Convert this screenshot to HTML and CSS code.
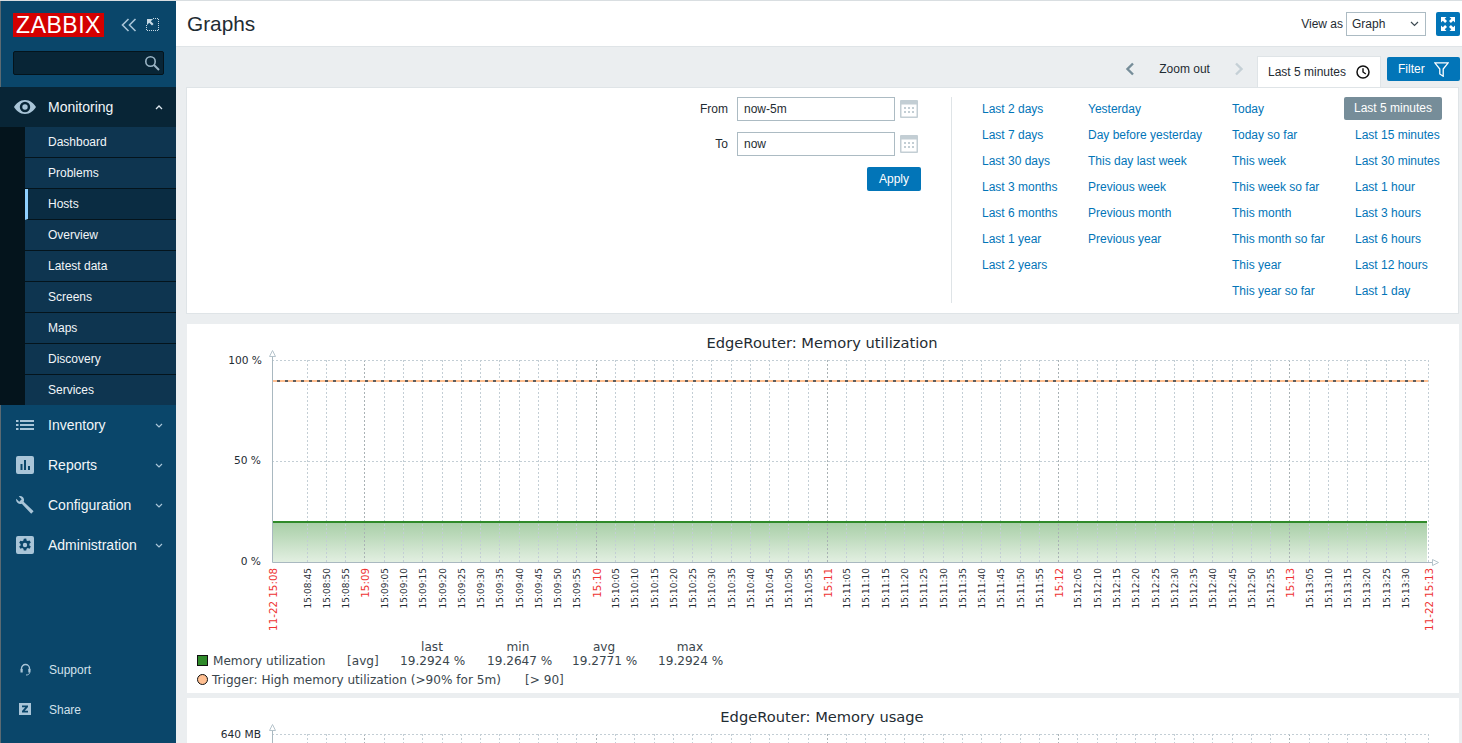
FILE: index.html
```html
<!DOCTYPE html>
<html lang="en">
<head>
<meta charset="utf-8">
<title>Graphs</title>
<link rel="stylesheet" href="styles.css">
</head>
<body>
<div class="app">
  <aside class="sidebar">
    <div class="brand">
      <span class="logo">ZABBIX</span>
      <svg class="brand-icon" width="16" height="14" viewBox="0 0 16 14"><path d="M7.500 1L1.500 7l6 6M14.500 1l-6 6 6 6" fill="none" stroke="#a9c5d8" stroke-width="1.600"/></svg>
      <svg class="brand-icon kiosk" width="13" height="13" viewBox="0 0 13 13"><path d="M7 .5h5.500v12H.5V7" fill="none" stroke="#c5d8e4" stroke-dasharray="1 1"/><path d="M1 1h6L4.800 3.200 7.600 6 6 7.600 3.200 4.800 1 7z" fill="#c5d8e4"/></svg>
    </div>
    <div class="search">
      <svg width="16" height="16" viewBox="0 0 16 16"><circle cx="6.500" cy="6.500" r="4.700" fill="none" stroke="#9bb5c6" stroke-width="1.600"/><path d="M10 10l5 5" stroke="#9bb5c6" stroke-width="2"/></svg>
    </div>
    <nav class="menu">
      <div class="menu-item open">
        <svg class="menu-icon eye" width="22" height="14" viewBox="0 0 22 14"><path fill-rule="evenodd" d="M11 0c5 0 9 3.500 11 7-2 3.500-6 7-11 7S2 10.500 0 7c2-3.500 6-7 11-7zm0 1.800a5.200 5.200 0 1 0 0 10.400 5.200 5.200 0 0 0 0-10.400zM11 4.300a2.700 2.700 0 1 1 0 5.400 2.700 2.700 0 0 1 0-5.400z" fill="#a9c5d8"/></svg>
        <span class="menu-label">Monitoring</span>
        <svg class="chevron" width="8" height="5" viewBox="0 0 8 5"><path d="M1 4l3-3 3 3" fill="none" stroke="#dfe9f0" stroke-width="1.300"/></svg>
      </div>
      <div class="submenu">
        <ul class="sub-list">
          <li class="sub-item">Dashboard</li>
          <li class="sub-item">Problems</li>
          <li class="sub-item selected">Hosts</li>
          <li class="sub-item">Overview</li>
          <li class="sub-item">Latest data</li>
          <li class="sub-item">Screens</li>
          <li class="sub-item">Maps</li>
          <li class="sub-item">Discovery</li>
          <li class="sub-item">Services</li>
        </ul>
      </div>
      <div class="menu-item">
        <svg class="menu-icon" width="18" height="12" viewBox="0 0 18 12"><path d="M0 1h2.500v2H0zM4 1h14v2H4zM0 5h2.500v2H0zM4 5h14v2H4zM0 9h2.500v2H0zM4 9h14v2H4z" fill="#a9c5d8"/></svg>
        <span class="menu-label">Inventory</span>
        <svg class="chevron" width="8" height="5" viewBox="0 0 8 5"><path d="M1 1l3 3 3-3" fill="none" stroke="#a9c5d8" stroke-width="1.200"/></svg>
      </div>
      <div class="menu-item">
        <svg class="menu-icon" width="18" height="18" viewBox="0 0 18 18"><path fill-rule="evenodd" d="M2 0h14a2 2 0 0 1 2 2v14a2 2 0 0 1-2 2H2a2 2 0 0 1-2-2V2a2 2 0 0 1 2-2zm2.500 8v6h2V8zm3.500-4v10h2V4zm4 6v4h2v-4z" fill="#a9c5d8"/></svg>
        <span class="menu-label">Reports</span>
        <svg class="chevron" width="8" height="5" viewBox="0 0 8 5"><path d="M1 1l3 3 3-3" fill="none" stroke="#a9c5d8" stroke-width="1.200"/></svg>
      </div>
      <div class="menu-item">
        <svg class="menu-icon" width="18" height="18" viewBox="0 0 18 18"><path d="M.3 2.800L3.200 5.700 5.700 3.200 2.800.3C5 -.5 7.800 .8 8 3.500c.1 1-.1 1.700-.4 2.300L17.600 15.200 15.200 17.800 5.800 7.700C3.100 8.700-.8 6.300.3 2.800z" fill="#a9c5d8"/></svg>
        <span class="menu-label">Configuration</span>
        <svg class="chevron" width="8" height="5" viewBox="0 0 8 5"><path d="M1 1l3 3 3-3" fill="none" stroke="#a9c5d8" stroke-width="1.200"/></svg>
      </div>
      <div class="menu-item">
        <svg class="menu-icon" width="18" height="18" viewBox="0 0 18 18"><path fill-rule="evenodd" d="M2 0h14a2 2 0 0 1 2 2v14a2 2 0 0 1-2 2H2a2 2 0 0 1-2-2V2a2 2 0 0 1 2-2zm5.800 2.800l-.4 1.800-1.200.7-1.800-.6-1.200 2.100 1.400 1.200v1.400l-1.400 1.200 1.200 2.100 1.800-.6 1.200.7.400 1.800h2.400l.4-1.800 1.200-.7 1.800.6 1.200-2.100-1.400-1.200V7.800l1.400-1.200-1.200-2.100-1.800.6-1.200-.7-.4-1.800zM9 6.800a2.200 2.200 0 1 1 0 4.400 2.200 2.200 0 0 1 0-4.400z" fill="#a9c5d8"/></svg>
        <span class="menu-label">Administration</span>
        <svg class="chevron" width="8" height="5" viewBox="0 0 8 5"><path d="M1 1l3 3 3-3" fill="none" stroke="#a9c5d8" stroke-width="1.200"/></svg>
      </div>
    </nav>
    <div class="user-menu">
      <div class="user-item">
        <svg class="user-icon headset" width="11" height="13" viewBox="0 0 11 13"><path d="M1.500 7.500V5.500a4 4 0 0 1 8 0v2" fill="none" stroke="#a9c5d8" stroke-width="1.400"/><path d="M.5 6h2.200v3.500H.5zM8.300 6h2.200v3.500H8.300z" fill="#a9c5d8"/><path d="M9.500 9.500c0 1.800-1.500 2.500-3.500 2.500" fill="none" stroke="#a9c5d8"/></svg>
        <span>Support</span>
      </div>
      <div class="user-item">
        <svg class="user-icon" width="12" height="12" viewBox="0 0 12 12"><path fill-rule="evenodd" d="M0 0h12v12H0zm3 2.500v1.700h3.300L3 8v1.500h6V7.800H5.700L9 4V2.500z" fill="#a9c5d8"/></svg>
        <span>Share</span>
      </div>
    </div>
  </aside>

  <main class="main">
    <header class="page-header">
      <h1 class="page-title">Graphs</h1>
      <div class="header-controls">
        <label class="view-label">View as</label>
        <div class="select">
          <span>Graph</span>
          <svg width="9" height="6" viewBox="0 0 9 6"><path d="M1 1l3.500 3.500L8 1" fill="none" stroke="#3d4a52" stroke-width="1.200"/></svg>
        </div>
        <button class="icon-button" aria-label="Fullscreen">
          <svg width="14" height="14" viewBox="0 0 14 14"><path d="M0 0h5.500L3.700 1.800 6 4.100 4.100 6 1.800 3.700 0 5.500zM14 0v5.500L12.200 3.700 9.900 6 8 4.100 10.300 1.800 8.500 0zM0 14V8.500l1.800 1.800L4.100 8 6 9.900 3.700 12.200 5.500 14zM14 14H8.500l1.800-1.800L8 9.900 9.900 8 12.200 10.300 14 8.500z" fill="#fff"/></svg>
        </button>
      </div>
    </header>

    <div class="filter-bar">
      <svg class="arrow" width="10" height="14" viewBox="0 0 10 14"><path d="M8 1.500L2.500 7 8 12.500" fill="none" stroke="#768d99" stroke-width="2.400"/></svg>
      <span class="zoom-out">Zoom out</span>
      <svg class="arrow next" width="10" height="14" viewBox="0 0 10 14"><path d="M2 1.500L7.500 7 2 12.500" fill="none" stroke="#c5d0d6" stroke-width="2.400"/></svg>
      <div class="time-tab">
        <span>Last 5 minutes</span>
        <svg width="14" height="14" viewBox="0 0 14 14"><circle cx="7" cy="7" r="6" fill="none" stroke="#111" stroke-width="1.500"/><path d="M7 3.200V7l2.800 2" fill="none" stroke="#111" stroke-width="1.400"/></svg>
      </div>
      <button class="filter-button">
        <span>Filter</span>
        <svg width="15" height="15" viewBox="0 0 15 15"><path d="M.8 .8h13.400L9.200 7v7.200L5.800 12V7z" fill="none" stroke="#fff" stroke-width="1.300"/></svg>
      </button>
    </div>

    <section class="filter-panel">
      <form class="time-form">
        <div class="form-row">
          <label class="form-label">From</label>
          <div class="text-input">now-5m</div>
          <svg class="calendar" width="18" height="18" viewBox="0 0 18 18"><path fill-rule="evenodd" d="M1 0h16a1 1 0 0 1 1 1v16a1 1 0 0 1-1 1H1a1 1 0 0 1-1-1V1a1 1 0 0 1 1-1zm.5 4.500v12h15v-12zM4 7h2v2H4zm4 0h2v2H8zm4 0h2v2h-2zm-8 4h2v2H4zm4 0h2v2H8zm4 0h2v2h-2z" fill="#c3ced4"/></svg>
        </div>
        <div class="form-row">
          <label class="form-label">To</label>
          <div class="text-input">now</div>
          <svg class="calendar" width="18" height="18" viewBox="0 0 18 18"><path fill-rule="evenodd" d="M1 0h16a1 1 0 0 1 1 1v16a1 1 0 0 1-1 1H1a1 1 0 0 1-1-1V1a1 1 0 0 1 1-1zm.5 4.500v12h15v-12zM4 7h2v2H4zm4 0h2v2H8zm4 0h2v2h-2zm-8 4h2v2H4zm4 0h2v2H8zm4 0h2v2h-2z" fill="#c3ced4"/></svg>
        </div>
        <div class="form-actions"><button class="apply" type="button">Apply</button></div>
      </form>
      <div class="quick-ranges">
        <ul class="range-col col-a">
          <li>Last 2 days</li><li>Last 7 days</li><li>Last 30 days</li><li>Last 3 months</li><li>Last 6 months</li><li>Last 1 year</li><li>Last 2 years</li>
        </ul>
        <ul class="range-col col-b">
          <li>Yesterday</li><li>Day before yesterday</li><li>This day last week</li><li>Previous week</li><li>Previous month</li><li>Previous year</li>
        </ul>
        <ul class="range-col col-c">
          <li>Today</li><li>Today so far</li><li>This week</li><li>This week so far</li><li>This month</li><li>This month so far</li><li>This year</li><li>This year so far</li>
        </ul>
        <ul class="range-col col-d">
          <li class="active">Last 5 minutes</li><li>Last 15 minutes</li><li>Last 30 minutes</li><li>Last 1 hour</li><li>Last 3 hours</li><li>Last 6 hours</li><li>Last 12 hours</li><li>Last 1 day</li>
        </ul>
      </div>
    </section>

    <section class="graph-card first">
      <svg id="graph-util" class="graph" width="1272" height="369" viewBox="187 324 1272 369">
        <defs>
          <linearGradient id="area" x1="0" y1="0" x2="0" y2="1">
            <stop offset="0" stop-color="#a9cfa8"/>
            <stop offset="1" stop-color="#e2efe1"/>
          </linearGradient>
        </defs>
        <rect x="273" y="523" width="1154" height="39" fill="url(#area)"/>
        <g id="grid-util"></g>
        <path d="M273 522H1427" stroke="#2f8a2a" stroke-width="2" fill="none"/>
        <path d="M272 381H1428" stroke="#ffbf91" stroke-width="2"/>
        <path d="M272 381H1428" stroke="#5c5c5c" stroke-width="2" stroke-dasharray="3 5" stroke-dashoffset="-5"/>
        <path d="M272.500 355V562.500H1434" fill="none" stroke="#a9b8c0"/>
        <path d="M272.500 350.500L269.500 356.500H275.500Z M1438.500 562.500L1432.500 559.500V565.500Z" fill="#fff" stroke="#b5c3cb"/>
        <g class="y-label">
          <text x="262" y="364">100 %</text>
          <text x="261" y="464">50 %</text>
          <text x="261" y="565">0 %</text>
        </g>
        <text class="graph-title" x="822" y="348" text-anchor="middle">EdgeRouter: Memory utilization</text>
        <g id="ticks-util"></g>
        <g class="legend">
          <text x="432" y="651" text-anchor="middle">last</text>
          <text x="518" y="651" text-anchor="middle">min</text>
          <text x="604" y="651" text-anchor="middle">avg</text>
          <text x="690" y="651" text-anchor="middle">max</text>
          <rect x="197.500" y="655.500" width="10" height="10" fill="#2f8a2a" stroke="#111"/>
          <text x="213" y="665">Memory utilization</text>
          <text x="347" y="665">[avg]</text>
          <text x="400" y="665">19.2924 %</text>
          <text x="487" y="665">19.2647 %</text>
          <text x="572" y="665">19.2771 %</text>
          <text x="658" y="665">19.2924 %</text>
          <circle cx="202.500" cy="679.500" r="5" fill="#ffbf91" stroke="#111"/>
          <text x="212" y="684">Trigger: High memory utilization (&gt;90% for 5m)</text>
          <text x="525" y="684">[&gt; 90]</text>
        </g>
      </svg>
    </section>

    <section class="graph-card">
      <svg id="graph-usage" class="graph" width="1272" height="45" viewBox="187 698 1272 45">
        <g id="grid-usage"></g>
        <path d="M272.500 730V743" fill="none" stroke="#a9b8c0"/>
        <path d="M272.500 724.500L269.500 730.500H275.500Z" fill="#fff" stroke="#b5c3cb"/>
        <text class="graph-title" x="822" y="722" text-anchor="middle">EdgeRouter: Memory usage</text>
        <g class="y-label"><text x="261" y="738">640 MB</text></g>
      </svg>
    </section>
  </main>
</div>
<script src="graph.js"></script>
</body>
</html>
```

FILE: styles.css
```css
* { box-sizing: border-box; }
html, body { margin: 0; height: 100%; overflow: hidden; }
body { font: 12px "Liberation Sans", Arial, sans-serif; color: #1f2c33; background: #ebeef0; }
ul { list-style: none; margin: 0; padding: 0; }
button { font: inherit; border: 0; cursor: pointer; }

.app { display: flex; height: 743px; }

/* sidebar */
.sidebar { width: 176px; flex: none; display: flex; flex-direction: column; background: #0a466a; color: #f2f6f9; border-top: 1px solid #d9dee1; box-shadow: inset 1px 0 0 #5b6a72; }
.brand { display: flex; align-items: flex-start; height: 39px; margin-top: 10px; padding-left: 13px; }
.logo { width: 91px; height: 24px; margin-top: 2px; background: #d40000; color: #fff; font-size: 23px; line-height: 24px; text-align: center; letter-spacing: .5px; }
.brand-icon { margin: 7px 0 0 17px; }
.brand-icon.kiosk { margin-left: 9px; }
.search { display: flex; align-items: center; justify-content: flex-end; height: 24px; margin: 1px 12px 0 13px; padding-right: 3px; background: #082536; border: 1px solid #04141c; border-radius: 2px; }
.menu { margin-top: 12px; }
.menu-item { display: flex; align-items: center; height: 40px; font-size: 14px; position: relative; padding-left: 48px; }
.menu-item.open { background: #082536; }
.menu-icon { position: absolute; left: 16px; top: 50%; transform: translateY(-50%); }
.menu-icon.eye { left: 14px; }
.menu-label { flex: 1; }
.chevron { margin-right: 13px; }
.submenu { padding-left: 25px; background: #04141c; }
.sub-item { display: flex; align-items: center; height: 31px; padding-left: 23px; background: #0e3550; border-bottom: 1px solid #04141c; }
.sub-item:last-child { height: 30px; border-bottom: 0; }
.sub-item.selected { background: #0a2c42; border-left: 3px solid #8fd0ff; padding-left: 20px; }
.user-menu { margin-top: auto; padding-bottom: 13px; }
.user-item { display: flex; align-items: center; height: 40px; padding-left: 49px; position: relative; color: #d3e2ec; }
.user-icon { position: absolute; left: 19px; top: 13px; }
.user-icon.headset { left: 20px; }

/* main */
.main { flex: 1; min-width: 0; display: flex; flex-direction: column; }
.page-header { display: flex; align-items: center; justify-content: space-between; flex: none; height: 47px; padding: 1px 2px 0 11px; background: #fff; border-top: 1px solid #d9dee1; border-bottom: 1px solid #dfe4e7; }
.page-title { margin: 0; font-size: 20.800px; font-weight: 400; }
.header-controls { display: flex; align-items: center; }
.view-label { margin-right: 3px; }
.select { display: flex; align-items: center; justify-content: space-between; width: 80px; height: 24px; padding: 0 6px 0 5px; border: 1px solid #acbbc3; background: #fff; }
.icon-button { display: flex; align-items: center; justify-content: center; width: 24px; height: 24px; margin-left: 10px; padding: 0; background: #0275b8; border-radius: 2px; }

.filter-bar { display: flex; align-items: flex-start; flex: none; height: 40px; padding: 9px 2px 0 0; justify-content: flex-end; }
.arrow { margin-top: 6px; }
.zoom-out { margin: 6px 24px 0; line-height: 14px; }
.arrow.next { margin-right: 13px; }
.time-tab { display: flex; align-items: center; gap: 10px; height: 31px; padding: 0 10px; background: #fff; border: 1px solid #dfe4e7; border-bottom: 0; position: relative; z-index: 1; }
.filter-button { display: flex; align-items: center; justify-content: space-between; width: 73px; height: 24px; margin: 1px 0 0 6px; padding: 0 11px; background: #0275b8; color: #fff; border-radius: 2px; }

.filter-panel { display: flex; flex: none; height: 227px; margin: 0 3px 10px 10px; padding: 9px 0 0; background: #fff; border: 1px solid #dfe4e7; }
.time-form { width: 764px; padding-right: 30px; }
.form-row { display: flex; align-items: center; justify-content: flex-end; height: 24px; margin-bottom: 11px; padding-right: 3px; }
.form-label { margin-right: 9px; }
.text-input { display: flex; align-items: center; width: 158px; height: 24px; padding-left: 6px; border: 1px solid #acbbc3; }
.calendar { margin-left: 5px; }
.form-actions { display: flex; justify-content: flex-end; }
.apply { width: 54px; height: 24px; background: #0275b8; color: #fff; border-radius: 2px; }
.quick-ranges { flex: 1; display: flex; border-left: 1px solid #dfe4e7; height: 206px; }
.range-col li { height: 26px; line-height: 24px; color: #0275b8; white-space: nowrap; }
.col-a { margin-left: 30px; width: 106px; }
.col-b { width: 144px; }
.col-c { width: 112px; }
.range-col li.active { width: 98px; height: 23px; margin-bottom: 3px; text-align: center; line-height: 23px; background: #768d99; color: #fff; border-radius: 2px; }
.col-d li:not(.active) { padding-left: 11px; }

.graph-card { flex: none; margin: 0 3px 5px 11px; background: #fff; }
.graph { display: block; }
.graph text { font-family: "DejaVu Sans", sans-serif; fill: #1f2c33; }
.graph text.graph-title { font-size: 14.670px; }
.y-label text { font-size: 10.670px; text-anchor: end; }
.legend text { font-size: 12.100px; fill: #3a464d; }
.tick { font-size: 9px; }
.graph text.tick-major { font-size: 10.300px; fill: #ee3333; }
.grid-line { stroke: #c3ced5; stroke-dasharray: 2 2; fill: none; }
.grid-line.strong { stroke: #a9b2b5; }
```

FILE: graph.js
```js
// Time axis: 5 second ticks, with labelled minutes, across the plot.
var NS = 'http://www.w3.org/2000/svg';
var PX_PER_TICK = 19.27, ORIGIN = 364.95;

function el(parent, name, attrs, text) {
  var node = document.createElementNS(NS, name);
  for (var key in attrs) node.setAttribute(key, attrs[key]);
  if (text) node.textContent = text;
  parent.appendChild(node);
  return node;
}

function pad(n) { return (n < 10 ? '0' : '') + n; }

function tickLabel(k) {
  var total = 15 * 3600 + 9 * 60 + k * 5;
  var m = Math.floor(total / 60) % 60;
  var s = total % 60;
  return s === 0 ? '15:' + pad(m) : '15:' + pad(m) + ':' + pad(s);
}

function drawGrid(grid, top, bottom) {
  for (var k = -3; k <= 54; k++) {
    var x = Math.floor(ORIGIN + PX_PER_TICK * k) + 0.5;
    var major = ((k % 12) + 12) % 12 === 0;
    el(grid, 'path', { d: 'M' + x + ' ' + top + 'V' + bottom, 'class': 'grid-line' + (major ? ' strong' : '') });
  }
  el(grid, 'path', { d: 'M1428.5 ' + top + 'V' + bottom, 'class': 'grid-line' });
}

function drawTicks(group) {
  for (var k = -3; k <= 54; k++) {
    var x = Math.floor(ORIGIN + PX_PER_TICK * k) + 0.5;
    var major = ((k % 12) + 12) % 12 === 0;
    var tx = x + (major ? 4 : 3.5);
    el(group, 'text', {
      'class': major ? 'tick-major' : 'tick',
      'text-anchor': 'end',
      transform: 'translate(' + tx + ' 568) rotate(-90)'
    }, tickLabel(k));
  }
  [['11-22 15:08', 276.5], ['11-22 15:13', 1432.5]].forEach(function (edge) {
    el(group, 'text', {
      'class': 'tick-major',
      'text-anchor': 'end',
      transform: 'translate(' + edge[1] + ' 568) rotate(-90)'
    }, edge[0]);
  });
}

var gridUtil = document.getElementById('grid-util');
drawGrid(gridUtil, 360, 562);
el(gridUtil, 'path', { d: 'M272 360.5H1428', 'class': 'grid-line' });
el(gridUtil, 'path', { d: 'M272 461.5H1428', 'class': 'grid-line' });
drawTicks(document.getElementById('ticks-util'));

var gridUsage = document.getElementById('grid-usage');
drawGrid(gridUsage, 734, 743);
el(gridUsage, 'path', { d: 'M272 734.5H1428', 'class': 'grid-line' });
```
